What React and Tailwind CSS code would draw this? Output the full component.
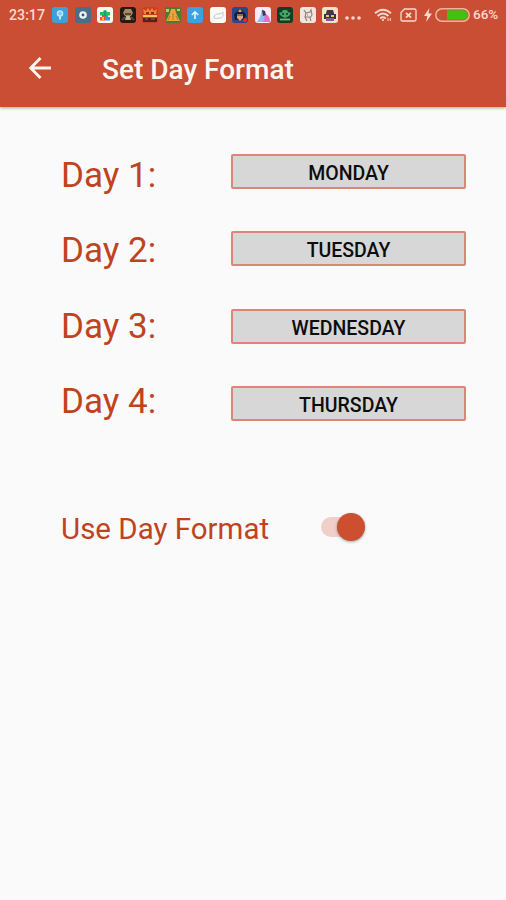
import { useState } from "react";

const initialDays = [
  { label: "Day 1:", value: "MONDAY" },
  { label: "Day 2:", value: "TUESDAY" },
  { label: "Day 3:", value: "WEDNESDAY" },
  { label: "Day 4:", value: "THURSDAY" },
];

// Notification icons, every one is drawn on a 16x16 tile
const notifications = [
  {
    id: "pin",
    bg: "#3f9fda",
    art: (
      <>
        <circle cx="8" cy="6.5" r="2.5" fill="#7cc6ec" stroke="#b9e6fb" strokeWidth="1.6" />
        <path d="M8 9v3.5" stroke="#b9e6fb" strokeWidth="2" />
      </>
    ),
  },
  {
    id: "disc",
    bg: "#4d6c88",
    art: (
      <>
        <circle cx="8" cy="8" r="3.8" fill="#e8f4fb" />
        <circle cx="8" cy="8" r="1.4" fill="#34556f" />
      </>
    ),
  },
  {
    id: "puzzle",
    bg: "#fdf8f2",
    art: (
      <>
        <path d="M3 5h3a2 2 0 1 1 4 0h3v3.500H3z" fill="#22c15c" />
        <path d="M3 13.500V10h2V8h3v5.500z" fill="#ee4a3c" />
        <path d="M8 8h3v2h2v3.500H8z" fill="#2a9be6" />
        <path d="M5 10h2v3.500H5z" fill="#f4c522" />
        <path d="M7 4h2v5H7z" fill="#2b9a6b" />
      </>
    ),
  },
  {
    id: "warrior",
    bg: "#211a16",
    art: (
      <>
        <path d="M3 6l2-4h6l2 4-2 3H5z" fill="#a38b5d" />
        <path d="M5 6h6v2H5z" fill="#5b4738" />
        <path d="M6 9h4l1 4H5z" fill="#c9b48d" />
        <path d="M2 13l3-3M14 13l-3-3" stroke="#705234" strokeWidth="1.5" />
      </>
    ),
  },
  {
    id: "burger",
    bg: "#c9401f",
    art: (
      <>
        <path d="M1 2l3 2 2-3 2 3 2-3 2 3 3-2-1 5H2z" fill="#f0843a" />
        <path d="M4 5h3v2H4zM9 5h3v2H9z" fill="#8f2c1c" />
        <path d="M1 8h14v2H1z" fill="#f8c15c" />
        <path d="M1 11h14v4H1z" fill="#4a2423" />
        <path d="M3 12h3M9 12h4" stroke="#b9602f" />
      </>
    ),
  },
  {
    id: "temple",
    bg: "#4f7a35",
    art: (
      <>
        <path d="M6 2h4l1 4 4 8H1l4-8z" fill="#f0a53a" />
        <path d="M8 6v7M5 9l-2 4M11 9l2 4" stroke="#d0702c" strokeWidth="1.1" />
        <path d="M1 2h3v3H1zM12 2h3v2h-3z" fill="#b9cf5c" />
      </>
    ),
  },
  {
    id: "upload",
    bg: "#38a2e2",
    art: <path d="M8 12V5M4.800 8L8 4.800 11.200 8" fill="none" stroke="#e4f6ff" strokeWidth="1.6" />,
  },
  {
    id: "sketch",
    bg: "#faf9f5",
    art: (
      <path
        d="M4 11c0-4 3-4 4-4s3 0 5-2c0 4 0 6-3 6s-4 1-6 0"
        fill="none"
        stroke="#a9cfcc"
        strokeWidth="1"
      />
    ),
  },
  {
    id: "hero",
    bg: "#2b468c",
    art: (
      <>
        <path d="M2 7l6-5 6 5-1 6H3z" fill="#13203d" />
        <path d="M8 2l2 3H6z" fill="#e7b43a" />
        <path d="M5 7h6v4l-3 3-3-3z" fill="#d9a384" />
        <path d="M5 8h6" stroke="#352b42" />
        <circle cx="13" cy="13" r="2" fill="#e22f2b" />
      </>
    ),
  },
  {
    id: "unicorn",
    bg: "#f7eafa",
    art: (
      <>
        <path d="M7 2l3 3v10H2c3-4 4-7 5-13z" fill="#8dbcf0" />
        <path d="M9 7c4 0 6 3 6 8H8c2-3 2-5 1-8z" fill="#ed68c8" />
        <path d="M7 3l3 1 1 4-3 1z" fill="#3d3558" />
      </>
    ),
  },
  {
    id: "goblin",
    bg: "#153b29",
    art: (
      <>
        <path d="M2 6l3-1 1-2h4l1 2 3 1-2 3-4 2-4-2z" fill="#46a75f" />
        <path d="M5 7h2M9 7h2" stroke="#123524" strokeWidth="1.3" />
        <path d="M3 12.500h10" stroke="#5cc477" strokeWidth="1.8" />
      </>
    ),
  },
  {
    id: "drawing",
    bg: "#efe6dd",
    art: (
      <path
        d="M4 3l2 3 4-1 1-2 1 5-2 3 1 3M6 6l-1 4 2 4M5 10h5M7 8h1"
        fill="none"
        stroke="#8b8178"
        strokeWidth="1.1"
      />
    ),
  },
  {
    id: "castle",
    bg: "#efe4c8",
    art: (
      <>
        <path d="M4 6l1-3h6l1 3v1H4z" fill="#4a3a2e" />
        <path d="M2 7h12v5H2z" fill="#37324f" />
        <path d="M4 8h3v2H4zM9 8h3v2H9z" fill="#d9d458" />
        <path d="M4 11h8v3H4z" fill="#8c5792" />
      </>
    ),
  },
];

const StatusBar = () => {
  return (
    <div className="flex h-[30px] items-center text-[#fbd9cf]">
      <span className="ml-[9px] w-[43px] text-[14.2px] font-medium leading-none">23:17</span>
      <div className="flex gap-[6.5px]">
        {notifications.map((n) => (
          <svg key={n.id} viewBox="0 0 16 16" className="size-4">
            <rect width="16" height="16" rx="3" fill={n.bg} />
            {n.art}
          </svg>
        ))}
      </div>
      <svg viewBox="0 0 16 4" className="ml-[7px] mt-[6px] h-1 w-4" fill="currentColor">
        <circle cx="2" cy="2" r="1.8" />
        <circle cx="8" cy="2" r="1.8" />
        <circle cx="14" cy="2" r="1.8" />
      </svg>

      {/* Wifi */}
      <svg viewBox="0 0 18 14" className="ml-[13px] h-[14px] w-[18px]" fill="none" stroke="currentColor" strokeWidth="2">
        <path d="M1 5.3Q9-1.8 17 5.3M3.6 8Q9 3 14.4 8M6.2 10.4Q9 8 11.8 10.4" />
        <circle cx="9" cy="12" r="1.1" fill="currentColor" stroke="none" />
        <path d="M14 13v-3M16.3 13v-3" strokeWidth="1" />
      </svg>

      {/* No sim */}
      <svg viewBox="0 0 17 14" className="ml-[8px] h-[14px] w-[17px]" fill="none" stroke="currentColor" strokeWidth="1.3">
        <path d="M4.5 1H14.5Q16 1 16 2.5V11.5Q16 13 14.5 13H2.5Q1 13 1 11.5V4.5z" />
        <path d="M6 4.8l5 4.8M11 4.8l-5 4.8" strokeWidth="1.8" />
      </svg>

      {/* Charging + battery */}
      <svg viewBox="0 0 8 14" className="ml-[7px] h-[14px] w-2" fill="currentColor">
        <path d="M5.4 0L0 8h3.3L2.2 14 8 5.6H4.5z" />
      </svg>
      <svg viewBox="0 0 35 14" className="ml-[3px] h-[14px] w-[35px]">
        <rect x="0.8" y="0.8" width="33.4" height="12.4" rx="6.2" fill="none" stroke="#eeb59c" strokeWidth="1.5" />
        <path d="M12 2.2H28a4.8 4.8 0 0 1 0 9.6H12z" fill="#42c014" />
      </svg>
      <span className="ml-[3px] text-[13.5px] font-medium leading-none">66%</span>
    </div>
  );
};

const Header = () => {
  return (
    <header className="h-[107px] bg-[#c94e33] shadow-[0_1px_3px_rgba(0,0,0,0.35)]">
      <StatusBar />
      <div className="flex h-[77px] items-center">
        <button className="mb-px ml-[29px]" aria-label="Back">
          <svg viewBox="0 0 22 22" className="size-[22px]" fill="none" stroke="#fff5f0" strokeWidth="2.8">
            <path d="M22 11H2M11.5 1L1.8 11l9.7 10" />
          </svg>
        </button>
        <h1 className="ml-[51px] pt-[3px] text-[28px] font-medium leading-none text-[#fff7f2]">
          Set Day Format
        </h1>
      </div>
    </header>
  );
};

const App = () => {
  const [enabled, setEnabled] = useState(true);

  return (
    <div className="h-[900px] w-[506px] overflow-hidden bg-[#fafafa] font-[Roboto,sans-serif]">
      <Header />

      <main className="pl-[61px]">
        <div className="flex pt-[30px]">
          <div className="w-[170px] pt-[0.5px] text-[35px] text-[#c0431f]">
            {initialDays.map((day) => (
              <div key={day.label} className="flex h-[75.5px] items-center leading-none">
                {day.label}
              </div>
            ))}
          </div>
          <div className="flex flex-col gap-[42.4px] pt-[17px]">
            {initialDays.map((day) => (
              <button
                key={day.value}
                className="flex h-[35px] w-[235px] items-center justify-center rounded-[2px] border-2 border-[#dc8579] bg-[#d7d7d7] pt-[4.5px] text-[19.5px] font-medium leading-none text-[#0d0d0d]"
              >
                {day.value}
              </button>
            ))}
          </div>
        </div>

        <div className="mt-[69px] flex h-10 items-center">
          <span className="w-[260px] pt-[2px] text-[29.5px] leading-none text-[#c0431f]">Use Day Format</span>
          {/* Switch */}
          <button
            role="switch"
            aria-checked={enabled}
            onClick={() => setEnabled(!enabled)}
            className={`mb-[4px] flex h-5 w-[44px] items-center rounded-full ${
              enabled ? "justify-end bg-[#f0cfca]" : "justify-start bg-[#cccccc]"
            }`}
          >
            <span className="size-7 rounded-full bg-[#cc4f30] shadow-[0_1px_3px_rgba(0,0,0,0.35)]" />
          </button>
        </div>
      </main>
    </div>
  );
};

export default App;
